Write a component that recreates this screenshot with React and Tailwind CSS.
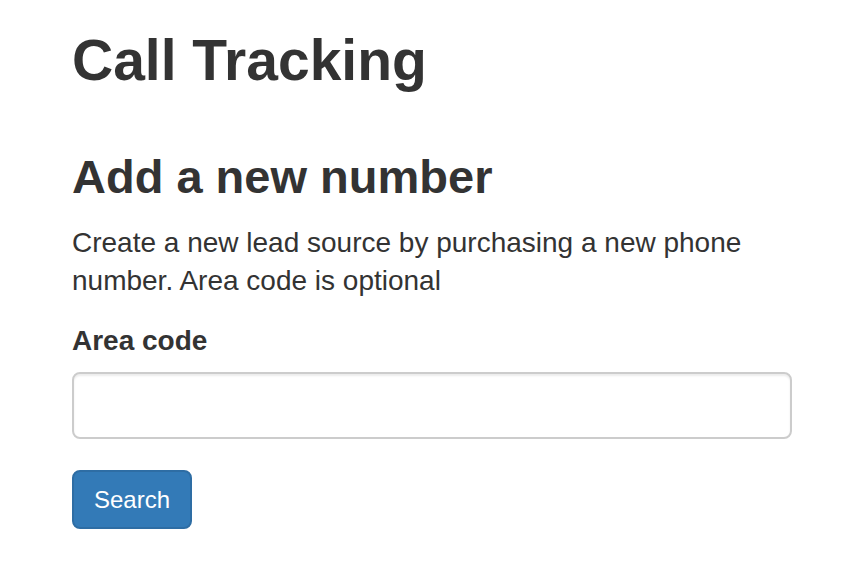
export default function App() {
  return (
    <div className="min-h-screen bg-white text-[#333]" style={{ fontFamily: '"Liberation Sans", Arial, Helvetica, sans-serif' }}>
      <div className="w-[720px] ml-[72px] pt-[29px]">
        <h1 className="text-[57px] leading-[63px] font-bold m-0">Call Tracking</h1>
        <h2 className="mt-[59px] text-[47px] leading-[52px] font-bold">Add a new number</h2>
        <p className="mt-[21px] text-[28px] leading-[38px]">
          Create a new lead source by purchasing a new phone number. Area code is optional
        </p>
        <label className="block mt-[22px] text-[28px] leading-[38px] font-bold">Area code</label>
        <input
          type="text"
          className="block mt-[12px] w-[720px] h-[67px] border-2 border-[#ccc] rounded-lg bg-white px-4 text-[28px] shadow-[inset_0_2px_2px_rgba(0,0,0,0.075)] outline-none"
        />
        <button className="mt-[31px] flex items-center justify-center w-[120px] h-[59px] bg-[#337ab7] border-2 border-[#2e6da4] rounded-lg text-white text-[24px] leading-none">
          Search
        </button>
      </div>
    </div>
  );
}
